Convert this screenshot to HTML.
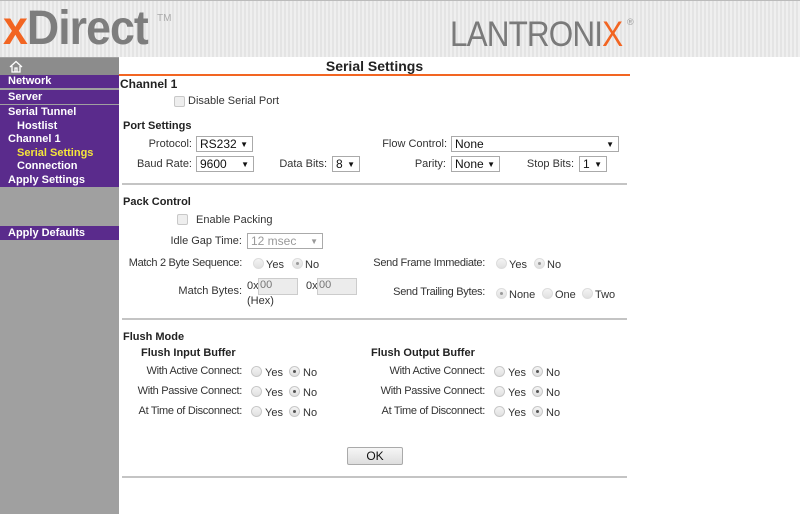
<!DOCTYPE html>
<html><head><meta charset="utf-8"><style>
*{margin:0;padding:0;box-sizing:border-box}
body{width:800px;height:514px;background:#fff;font-family:"Liberation Sans",Arial,sans-serif;position:relative;overflow:hidden;color:#222}
.a{position:absolute;white-space:nowrap}
#hdr{position:absolute;left:0;top:0;width:800px;height:57px;background:repeating-linear-gradient(90deg,#e4e4e4 0 2px,#efefef 2px 4px);border-top:1px solid #bbb}
#side{position:absolute;left:0;top:57px;width:119px;height:457px;background:#a0a0a0}
.p{position:absolute;left:0;width:119px;background:#5a2b8c;color:#fff;font-weight:bold;font-size:11px;padding-left:8px}
.l{font-size:11px;color:#333;text-align:right}
.b{font-size:11px;font-weight:bold;color:#222}
.sel{position:absolute;height:16px;border:1px solid #aaa;background:#fff;font-size:12px;padding-left:3px;line-height:14px;color:#111}
.sel:after{content:"▼";position:absolute;right:4px;top:1px;font-size:8px}
.r{position:absolute;width:11px;height:11px;border-radius:50%;border:1px solid #c8c8c8;background:linear-gradient(#f4f4f4,#e0e0e0)}
.r.c:after{content:"";position:absolute;left:3px;top:3px;width:3px;height:3px;border-radius:50%;background:#555}
.r.d{border-color:#ddd}
.r.d.c:after{background:#999}
.t{font-size:11px;color:#333}
.hr{position:absolute;left:122px;width:505px;height:2px;background:#c4c4c4}
.cb{position:absolute;width:11px;height:11px;border:1px solid #c8c8c8;background:#eee;border-radius:2px}
.sm{letter-spacing:-0.3px}
</style></head><body>
<div id="hdr"></div>
<div class="a" style="left:3px;top:1px;font-size:48px;font-weight:bold;color:#7d7d7d;transform:scaleX(0.93);transform-origin:0 0;letter-spacing:-1px"><span style="color:#f26522">x</span>Direct</div>
<div class="a" style="left:157px;top:13px;font-size:10px;color:#aaa">TM</div>
<div class="a" style="left:450px;top:15px;font-size:35px;color:#7a7a7a;transform:scaleX(0.9);transform-origin:0 0;letter-spacing:-1px">LANTRONI<span style="color:#f26522">X</span></div>
<div class="a" style="left:627px;top:17px;font-size:9px;color:#999">®</div>

<div id="side"></div>
<div class="a" style="left:0;top:58px;width:119px;height:17px;background:#8c8c8c"></div>
<svg class="a" style="left:9px;top:60px" width="14" height="13" viewBox="0 0 14 13"><path d="M1 7 L7 1.5 L13 7 M3 6 V12 H11 V6 M6 12 V8 H8 V12" fill="none" stroke="#fff" stroke-width="1.3"/></svg>
<div class="p" style="top:75px;height:13px;line-height:13px">Network</div>
<div class="p" style="top:90px;height:14px;line-height:14px">Server</div>
<div class="p" style="top:105px;height:82px;line-height:13.6px;padding-top:1px">Serial Tunnel<br><span style="padding-left:9px">Hostlist</span><br>Channel 1<br><span style="padding-left:9px;color:#f5e53b">Serial Settings</span><br><span style="padding-left:9px">Connection</span><br>Apply Settings</div>
<div class="p" style="top:226px;height:14px;line-height:14px">Apply Defaults</div>

<div class="a" style="left:119px;top:58px;width:511px;text-align:center;font-size:14px;font-weight:bold;color:#222">Serial Settings</div>
<div class="a" style="left:119px;top:74px;width:511px;height:2px;background:#f26522"></div>
<div class="a" style="left:120px;top:77px;font-size:12px;font-weight:bold">Channel 1</div>
<div class="cb" style="left:174px;top:96px"></div>
<div class="a t" style="left:188px;top:95px">Disable Serial Port</div>

<div class="a b" style="left:123px;top:120px">Port Settings</div>
<div class="a l" style="left:92px;top:138px;width:100px">Protocol:</div>
<div class="sel" style="left:196px;top:136px;width:57px">RS232</div>
<div class="a l" style="left:347px;top:138px;width:100px">Flow Control:</div>
<div class="sel" style="left:451px;top:136px;width:168px">None</div>
<div class="a l" style="left:92px;top:158px;width:100px">Baud Rate:</div>
<div class="sel" style="left:196px;top:156px;width:58px">9600</div>
<div class="a l" style="left:227px;top:158px;width:100px">Data Bits:</div>
<div class="sel" style="left:332px;top:156px;width:28px">8</div>
<div class="a l" style="left:346px;top:158px;width:100px">Parity:</div>
<div class="sel" style="left:451px;top:156px;width:49px">None</div>
<div class="a l" style="left:474px;top:158px;width:100px">Stop Bits:</div>
<div class="sel" style="left:579px;top:156px;width:28px">1</div>
<div class="hr" style="top:183px"></div>

<div class="a b" style="left:123px;top:196px">Pack Control</div>
<div class="cb" style="left:177px;top:214px"></div>
<div class="a t" style="left:196px;top:214px">Enable Packing</div>
<div class="a l" style="left:142px;top:235px;width:100px">Idle Gap Time:</div>
<div class="sel" style="left:247px;top:233px;width:76px;color:#999">12 msec</div>
<div class="a l sm" style="left:92px;top:257px;width:150px">Match 2 Byte Sequence:</div>
<div class="r d" style="left:253px;top:258px"></div><div class="a t" style="left:266px;top:259px">Yes</div>
<div class="r d c" style="left:292px;top:258px"></div><div class="a t" style="left:305px;top:259px">No</div>
<div class="a l sm" style="left:335px;top:257px;width:150px">Send Frame Immediate:</div>
<div class="r d" style="left:496px;top:258px"></div><div class="a t" style="left:509px;top:259px">Yes</div>
<div class="r d c" style="left:534px;top:258px"></div><div class="a t" style="left:547px;top:259px">No</div>
<div class="a l" style="left:142px;top:285px;width:100px">Match Bytes:</div>
<div class="a t" style="left:247px;top:280px">0x</div>
<div class="a" style="left:258px;top:278px;width:40px;height:17px;background:#ececec;border:1px solid #ccc;font-size:11px;color:#777;padding-left:1px">00</div>
<div class="a t" style="left:306px;top:280px">0x</div>
<div class="a" style="left:317px;top:278px;width:40px;height:17px;background:#ececec;border:1px solid #ccc;font-size:11px;color:#777;padding-left:1px">00</div>
<div class="a t" style="left:247px;top:295px">(Hex)</div>
<div class="a l sm" style="left:335px;top:286px;width:150px">Send Trailing Bytes:</div>
<div class="r d c" style="left:496px;top:288px"></div><div class="a t" style="left:509px;top:289px">None</div>
<div class="r d" style="left:542px;top:288px"></div><div class="a t" style="left:555px;top:289px">One</div>
<div class="r d" style="left:582px;top:288px"></div><div class="a t" style="left:595px;top:289px">Two</div>
<div class="hr" style="top:318px"></div>

<div class="a b" style="left:123px;top:331px">Flush Mode</div>
<div class="a b" style="left:141px;top:347px">Flush Input Buffer</div>
<div class="a b" style="left:371px;top:347px">Flush Output Buffer</div>

<div class="a l sm" style="left:92px;top:365px;width:150px">With Active Connect:</div>
<div class="a l sm" style="left:92px;top:385px;width:150px">With Passive Connect:</div>
<div class="a l sm" style="left:92px;top:405px;width:150px">At Time of Disconnect:</div>
<div class="r" style="left:251px;top:366px"></div><div class="a t" style="left:265px;top:367px">Yes</div>
<div class="r c" style="left:289px;top:366px"></div><div class="a t" style="left:303px;top:367px">No</div>
<div class="r" style="left:251px;top:386px"></div><div class="a t" style="left:265px;top:387px">Yes</div>
<div class="r c" style="left:289px;top:386px"></div><div class="a t" style="left:303px;top:387px">No</div>
<div class="r" style="left:251px;top:406px"></div><div class="a t" style="left:265px;top:407px">Yes</div>
<div class="r c" style="left:289px;top:406px"></div><div class="a t" style="left:303px;top:407px">No</div>

<div class="a l sm" style="left:335px;top:365px;width:150px">With Active Connect:</div>
<div class="a l sm" style="left:335px;top:385px;width:150px">With Passive Connect:</div>
<div class="a l sm" style="left:335px;top:405px;width:150px">At Time of Disconnect:</div>
<div class="r" style="left:494px;top:366px"></div><div class="a t" style="left:508px;top:367px">Yes</div>
<div class="r c" style="left:532px;top:366px"></div><div class="a t" style="left:546px;top:367px">No</div>
<div class="r" style="left:494px;top:386px"></div><div class="a t" style="left:508px;top:387px">Yes</div>
<div class="r c" style="left:532px;top:386px"></div><div class="a t" style="left:546px;top:387px">No</div>
<div class="r" style="left:494px;top:406px"></div><div class="a t" style="left:508px;top:407px">Yes</div>
<div class="r c" style="left:532px;top:406px"></div><div class="a t" style="left:546px;top:407px">No</div>

<div class="a" style="left:347px;top:447px;width:56px;height:18px;border:1px solid #aaa;border-radius:2px;background:linear-gradient(#f6f6f6,#dedede);font-size:12px;text-align:center;line-height:16px;color:#111">OK</div>
<div class="hr" style="top:476px"></div>
</body></html>
